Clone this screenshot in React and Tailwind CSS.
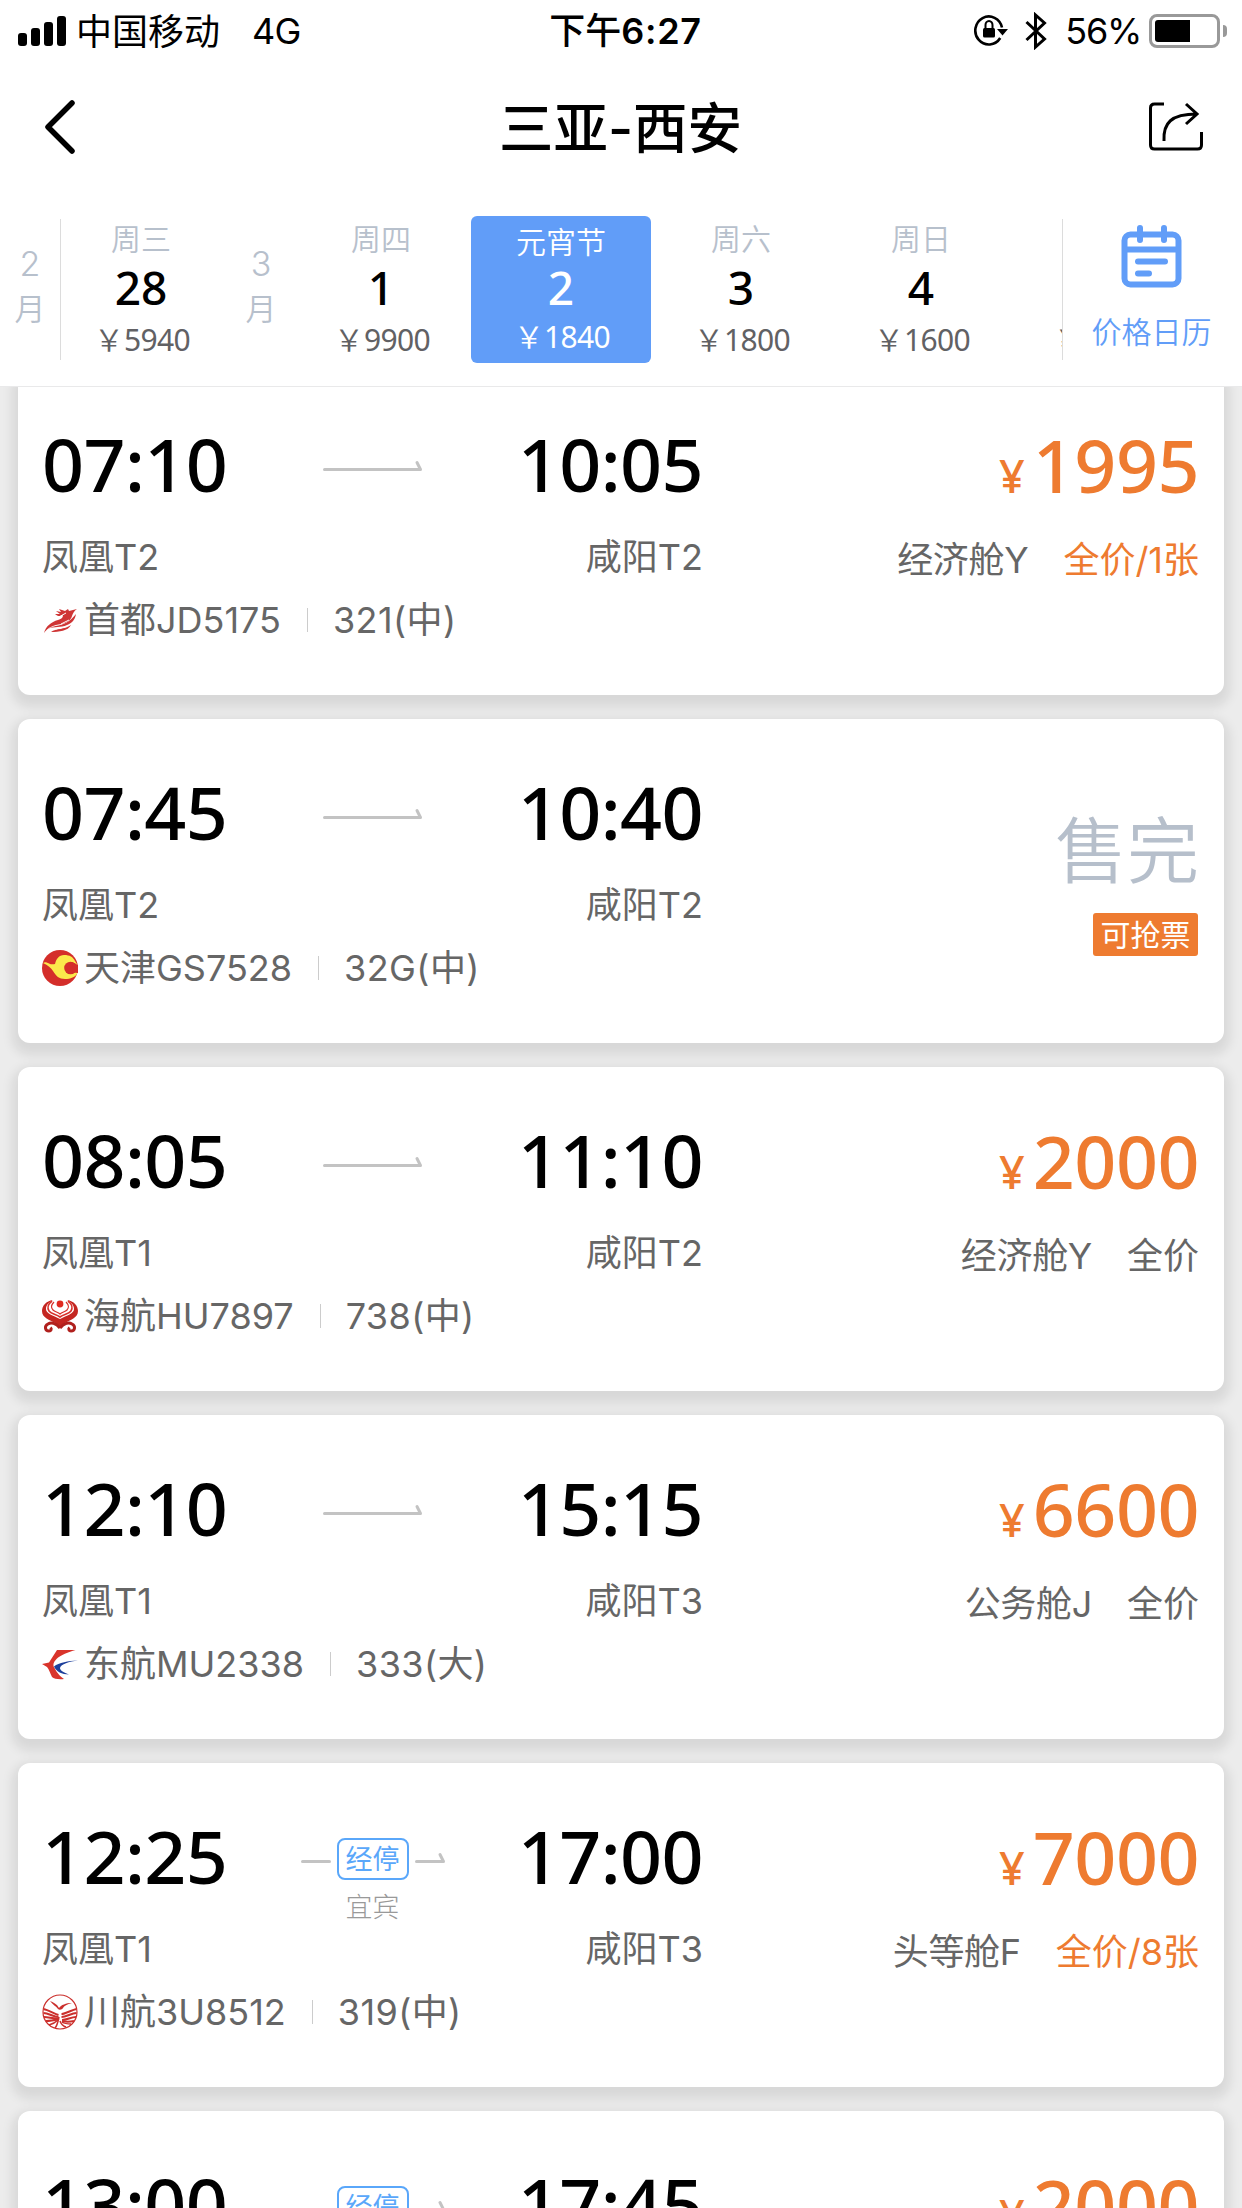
const days = [
  { week: "周三", day: "28", price: "5940" },
  { month: "3" },
  { week: "周四", day: "1", price: "9900" },
  { week: "元宵节", day: "2", price: "1840", active: true },
  { week: "周六", day: "3", price: "1800" },
  { week: "周日", day: "4", price: "1600" },
  { price: "1600" },
];

const flights = [
  {
    dep: "07:10",
    arr: "10:05",
    from: "凤凰T2",
    to: "咸阳T2",
    logo: CapitalLogo,
    no: "首都JD5175",
    plane: "321(中)",
    price: "1995",
    cabin: "经济舱Y",
    fare: "全价/1张",
    few: true,
  },
  {
    dep: "07:45",
    arr: "10:40",
    from: "凤凰T2",
    to: "咸阳T2",
    logo: TianjinLogo,
    no: "天津GS7528",
    plane: "32G(中)",
    soldOut: true,
  },
  {
    dep: "08:05",
    arr: "11:10",
    from: "凤凰T1",
    to: "咸阳T2",
    logo: HainanLogo,
    no: "海航HU7897",
    plane: "738(中)",
    price: "2000",
    cabin: "经济舱Y",
    fare: "全价",
  },
  {
    dep: "12:10",
    arr: "15:15",
    from: "凤凰T1",
    to: "咸阳T3",
    logo: EasternLogo,
    no: "东航MU2338",
    plane: "333(大)",
    price: "6600",
    cabin: "公务舱J",
    fare: "全价",
  },
  {
    dep: "12:25",
    arr: "17:00",
    from: "凤凰T1",
    to: "咸阳T3",
    stop: "宜宾",
    logo: SichuanLogo,
    no: "川航3U8512",
    plane: "319(中)",
    price: "7000",
    cabin: "头等舱F",
    fare: "全价/8张",
    few: true,
  },
  {
    dep: "13:00",
    arr: "17:45",
    stop: "",
    price: "2000",
  },
];

function CapitalLogo() {
  return (
    <svg viewBox="0 0 36 36" className="h-9 w-9">
      <g fill="#cf3535">
        <path d="M2 31C4 24 9 20 16 18c4-1 5-3 5-5-3 2-6 1-8-1l5 0-4-3 5 1-2-3 6 2 3-2 1 2 8-2c-3 2-4 4-5 7-1 4-5 7-11 8C12 23 6 25 2 31z" />
        <path d="M6 27c6-4 15-3 21-8 3-2 5-5 7-7-1 6-4 9-9 11-6 3-13 1-19 4z" />
        <path d="M9 30c5-4 13-2 20-7-3 6-12 7-20 7z" />
      </g>
      <path d="M15 16l9-5M19 22l8-4M14 27l9-2" stroke="#fff" strokeWidth="1" />
    </svg>
  );
}

function TianjinLogo() {
  return (
    <svg viewBox="0 0 36 36" className="h-9 w-9">
      <circle cx="18" cy="18" r="18" fill="#d42e2a" />
      <path
        d="M1 13c2-1.500 4-.5 6 .5 2 1 4 1 6 .5C14 9 17 5 22 5c6 0 9 2 11 6l2.500 4-3 2 3 6c-2 4-7 6-12.500 6-6 0-9-3-12-8-2-3-5-6-10-8z"
        fill="#fbe94b"
      />
      <circle cx="28.500" cy="18" r="6.300" fill="#d42e2a" />
      <path d="M30 12l6 3v8l-5-.5z" fill="#d42e2a" />
    </svg>
  );
}

function HainanLogo() {
  return (
    <svg viewBox="0 0 36 36" className="h-9 w-9">
      <path
        d="M11 2C4 3 0 8 0 13c0 7 8 9 13 12l5 4 5-4c5-3 13-5 13-12 0-5-4-10-11-11 4 2 7 5 7 9 0 5-7 6-14 10C11 17 4 16 4 11c0-4 3-7 7-9z"
        fill="#c42621"
      />
      <g fill="none" stroke="#d8302a">
        <path d="M10 3c-4 3-5 7-3 10 2 3 7 3 11 6 4-3 9-3 11-6 2-3 1-7-3-10" strokeWidth="1.600" />
        <path d="M12 4c-3 3-3 6-1 8 2 2 5 2 7 4 2-2 5-2 7-4 2-2 2-5-1-8" strokeWidth="1.200" />
      </g>
      <circle cx="18" cy="6" r="3.400" fill="#e02a20" />
      <g fill="none" stroke="#b0201d" strokeWidth="3">
        <path d="M18 30c-4-5-9-6-12-4-4 2-3 7 1 7 2 0 3-2 1.500-3.500" />
        <path d="M18 30c4-5 9-6 12-4 4 2 3 7-1 7-2 0-3-2-1.500-3.500" />
      </g>
    </svg>
  );
}

function EasternLogo() {
  return (
    <svg viewBox="0 0 36 36" className="h-9 w-9">
      <path
        d="M0 18l7-1.500L15 4h18.500c-7 2-15 5-19 9-3 3-4 6-2 9 2 4 6 9 9.500 11-5 .5-10 0-12-2-1.500-3-3-8-5-10z"
        fill="#d9342b"
      />
      <path
        d="M36 14.500c-10 .5-19 2-24 6 2 5 8 8 15 8-5-2-9-4-9-6.500 1-4 9-6.500 18-7.500z"
        fill="#1d3f9b"
      />
    </svg>
  );
}

function SichuanLogo() {
  return (
    <svg viewBox="0 0 36 36" className="h-9 w-9">
      <circle cx="18" cy="18" r="17" fill="#fff" stroke="#cb2f2c" strokeWidth="1.200" />
      <path d="M8 7c3 1 7 3 9 7 2-3 7-5 13-5-5 1-8 3-9 5-1 2-4 2-5 1-2-3-5-4-8-8z" fill="#cb2f2c" />
      <g fill="none" stroke="#cb2f2c" strokeWidth="2">
        <path d="M1.500 15c5 1 11 5 15 6M34.500 15c-5 1-11 5-15 5" />
        <path d="M1.500 19c5 0 10 4 15 4M34.500 19c-5 0-10 4-15 4" />
        <path d="M2 23c5 0 9 2 15 1.500M34 23c-5 0-9 3-14 3" />
        <path d="M4 27c5 0 9-1 13-2M32 27c-5 1-8 1-12 0" />
        <path d="M7 31c4-1 7-3 9-5M29 30c-4 0-6 0-9-2" strokeWidth="1.500" />
        <path d="M13 34c2-2 3-6 4-11M24 33c-3-1-5-3-6-6" strokeWidth="1.500" />
      </g>
    </svg>
  );
}

function StatusBar() {
  return (
    <div className="flex h-[62px] items-center text-[36px] leading-[60px] text-black">
      <div className="flex flex-1 items-center pl-[18px]">
        <div className="flex h-[30px] items-end gap-1">
          <i className="h-[13px] w-[9px] rounded-[3px] bg-black" />
          <i className="h-[18px] w-[9px] rounded-[3px] bg-black" />
          <i className="h-[24px] w-[9px] rounded-[3px] bg-black" />
          <i className="h-[30px] w-[9px] rounded-[3px] bg-black" />
        </div>
        <span className="ml-[10px] pt-px font-[375]">中国移动</span>
        <span className="ml-[32px] tracking-[-0.8px]">4G</span>
      </div>
      <div className="pl-[6px] font-medium">
        下午<span className="font-semibold tracking-[0.7px]">6:27</span>
      </div>
      <div className="flex flex-1 items-center justify-end pr-[15px]">
        <svg viewBox="0 0 34 36" className="mb-[2px] h-9 w-[34px]" fill="none">
          <path d="M26.200 26A13.500 14 0 1 1 28 15.500" stroke="#000" strokeWidth="2.600" />
          <path d="M23 17h11l-5.500 6.500z" fill="#000" />
          <rect x="9" y="16" width="12" height="9.500" rx="1.500" fill="#000" />
          <path d="M11.500 17v-4a3.500 4 0 0 1 7 0v4" stroke="#000" strokeWidth="2" />
        </svg>
        <svg viewBox="0 0 22 38" className="ml-[17px] h-[38px] w-[22px]" fill="none">
          <path d="M1.500 10l18 17-9 8V3l9 8-18 17" stroke="#000" strokeWidth="3" />
        </svg>
        <span className="ml-[18px] tracking-[-1.300px]">56%</span>
        <div className="ml-[8px] flex h-[34px] w-[71px] rounded-[8px] border-[3px] border-[#999] p-[3px]">
          <div className="h-full w-[35px] rounded-l-[3px] bg-black" />
        </div>
        <div className="ml-[3px] h-3 w-1 rounded-r-full bg-[#999]" />
      </div>
    </div>
  );
}

function TitleBar() {
  return (
    <div className="flex h-[130px] items-center justify-between pr-[39px] pl-[44px]">
      <svg viewBox="0 0 32 54" className="h-[54px] w-8" fill="none">
        <path d="M28 3L4 27l24 24" stroke="#000" strokeWidth="5.500" strokeLinecap="round" strokeLinejoin="round" />
      </svg>
      <h1 className="pt-px pl-[16px] text-[54.500px] leading-[80px] font-medium text-black">三亚-西安</h1>
      <svg viewBox="0 0 54 50" className="mb-[2px] h-[50px] w-[54px]" fill="none" stroke="#000" strokeWidth="3">
        <path d="M15 3H5.500Q1.500 3 1.500 7v37q0 4 4 4h43q4 0 4-4V31" />
        <path d="M15 40C14 22 22 13 48 13M37 3l11 10-11 10" />
      </svg>
    </div>
  );
}

function Month({ value }) {
  return (
    <div className="flex w-[60px] shrink-0 flex-col items-center pt-6 text-[30px] leading-[45px] text-[#b7c0cc]">
      <span className="pt-px text-[34px]">{value}</span>
      <span className="text-[31px]">月</span>
    </div>
  );
}

function Day({ week, day, price, active }) {
  return (
    <div
      className={`flex w-[180px] shrink-0 flex-col items-center rounded-[6px] ${
        active ? "bg-[#619df8] text-white" : "text-[#616164]"
      }`}
    >
      <span className={`h-[46px] text-[30px] leading-[46px] ${active ? "mt-[3px]" : "text-[#b7c0cc]"}`}>{week}</span>
      <span
        className={`h-[50px] font-['Noto_Sans'] text-[46px] leading-[50px] font-[480] ${
          active ? "mt-[-3px]" : "text-black"
        }`}
      >
        {day}
      </span>
      <span className={`text-[30px] leading-[44px] ${active ? "mt-[3px] pl-[2px]" : "mt-[6px] pl-[2px]"}`}>
        <span>￥</span>
        <span className="font-['Noto_Sans'] font-normal tracking-[-0.6px]">{price}</span>
      </span>
    </div>
  );
}

function DateStrip() {
  return (
    <div className="flex h-[195px] items-start border-b border-[#e9e9ea] pt-6 font-[350]">
      <Month value="2" />
      <div className="mt-[3px] h-[141px] w-px shrink-0 bg-[#dcdcdc]" />
      <div className="ml-[-10px] flex h-[147px] w-[1011px] overflow-hidden">
        {days.map((d, i) => (d.month ? <Month key={i} value={d.month} /> : <Day key={i} {...d} />))}
      </div>
      <div className="mt-[3px] h-[141px] w-px shrink-0 bg-[#dcdcdc]" />
      <div className="flex flex-1 flex-col items-center pt-[9px] pr-[2px] text-[#619df8]">
        <svg viewBox="0 0 62 64" className="h-16 w-[62px]" fill="none" stroke="#619df8">
          <rect x="3.500" y="9.500" width="54" height="50" rx="6" strokeWidth="6" />
          <path d="M3 24.500h55" strokeWidth="6" />
          <path d="M19 3v12M43 3v12M17 36.500h27M17 48.500h11" strokeWidth="6" strokeLinecap="round" />
        </svg>
        <span className="mt-[20px] text-[30px] leading-[46px]">价格日历</span>
      </div>
    </div>
  );
}

function Route({ stop }) {
  if (stop === undefined) {
    return (
      <svg viewBox="0 0 100 12" className="mt-[33px] h-3 w-[100px]" fill="none" stroke="#c3c3c3">
        <path d="M1.500 9.500h96L94 2.500" strokeWidth="3" strokeLinecap="round" strokeLinejoin="round" />
      </svg>
    );
  }
  return (
    <div className="flex h-[74px] flex-col items-center pt-[19px]">
      <div className="flex items-start">
        <div className="mt-[22px] h-[3px] w-[30px] rounded-full bg-[#c3c3c3]" />
        <div className="mx-[6px] flex h-[42px] w-[72px] shrink-0 items-center justify-center rounded-[8px] border-2 border-[#5aa7fa] pt-px text-[27px] leading-[38px] text-[#5aa7fa]">
          经停
        </div>
        <svg viewBox="0 0 30 12" className="mt-[14px] h-3 w-[30px]" fill="none" stroke="#c3c3c3">
          <path d="M1.500 9.500h27L25 2.500" strokeWidth="3" strokeLinecap="round" strokeLinejoin="round" />
        </svg>
      </div>
      {stop && <span className="mt-[8px] text-[27px] leading-[40px] font-light text-[#999]">{stop}</span>}
    </div>
  );
}

function Time({ children }) {
  return (
    <span className="font-['Noto_Sans'] text-[73.500px] leading-[74px] font-[480] tracking-[-0.6px] text-black">
      {children}
    </span>
  );
}

function FlightCard({ flight }) {
  const Logo = flight.logo;
  return (
    <div className="flex h-[324px] shrink-0 justify-between rounded-[12px] bg-white pr-[25px] pl-6 text-[36px] leading-[48px] font-[375] text-[#666] shadow-[0_6px_11px_6px_rgba(0,0,0,0.085)]">
      <div className="w-[661px] pt-[56px]">
        <div className="flex h-[74px] items-start justify-between">
          <div className="w-[189px]">
            <Time>{flight.dep}</Time>
          </div>
          <Route stop={flight.stop} />
          <div className="w-[189px] text-right">
            <Time>{flight.arr}</Time>
          </div>
        </div>
        <div className="mt-[32px] flex justify-between">
          <span>{flight.from}</span>
          <span>{flight.to}</span>
        </div>
        {Logo && (
          <div className="mt-[15px] flex items-center">
            <Logo />
            <span className="ml-[6px]">{flight.no}</span>
            <i className="mr-[25px] ml-[26px] h-6 w-px bg-[#ccc]" />
            <span className="tracking-[0.4px]">{flight.plane}</span>
          </div>
        )}
      </div>
      {flight.soldOut ? (
        <div className="flex flex-col items-end pt-[84px]">
          <span className="text-[72px] leading-[96px] font-[350] text-[#b6bfcb]">售完</span>
          <span className="mt-[14px] mr-px h-[43px] w-[105px] rounded-[3px] bg-[#ee7b30] text-center text-[30px] leading-[44px] text-white">
            可抢票
          </span>
        </div>
      ) : (
        <div className="flex flex-col items-end pt-[57px]">
          <div className="flex h-[74px] items-baseline leading-[74px] text-[#ee7b30]">
            <span className="mr-[8px] font-['Noto_Sans'] text-[45px] font-medium">¥</span>
            <span className="font-['Noto_Sans'] text-[73.500px] font-[460] tracking-[-0.5px]">{flight.price}</span>
          </div>
          <div className="mt-[34px] flex gap-[35px]">
            <span className="tracking-[-0.3px]">{flight.cabin}</span>
            <span className={flight.few ? "text-[#ee7b30]" : ""}>{flight.fare}</span>
          </div>
        </div>
      )}
    </div>
  );
}

export default function App() {
  return (
    <div className="flex h-[2208px] w-[1242px] flex-col overflow-hidden bg-[#ececec] font-['Inter','Noto_Sans_CJK_SC',sans-serif]">
      <header className="relative z-10 h-[387px] shrink-0 bg-white">
        <StatusBar />
        <TitleBar />
        <DateStrip />
      </header>
      {/* list is scrolled a little under the header */}
      <main className="mt-[-16px] flex flex-col gap-6 px-[18px]">
        {flights.map((f) => (
          <FlightCard key={f.dep} flight={f} />
        ))}
      </main>
    </div>
  );
}
